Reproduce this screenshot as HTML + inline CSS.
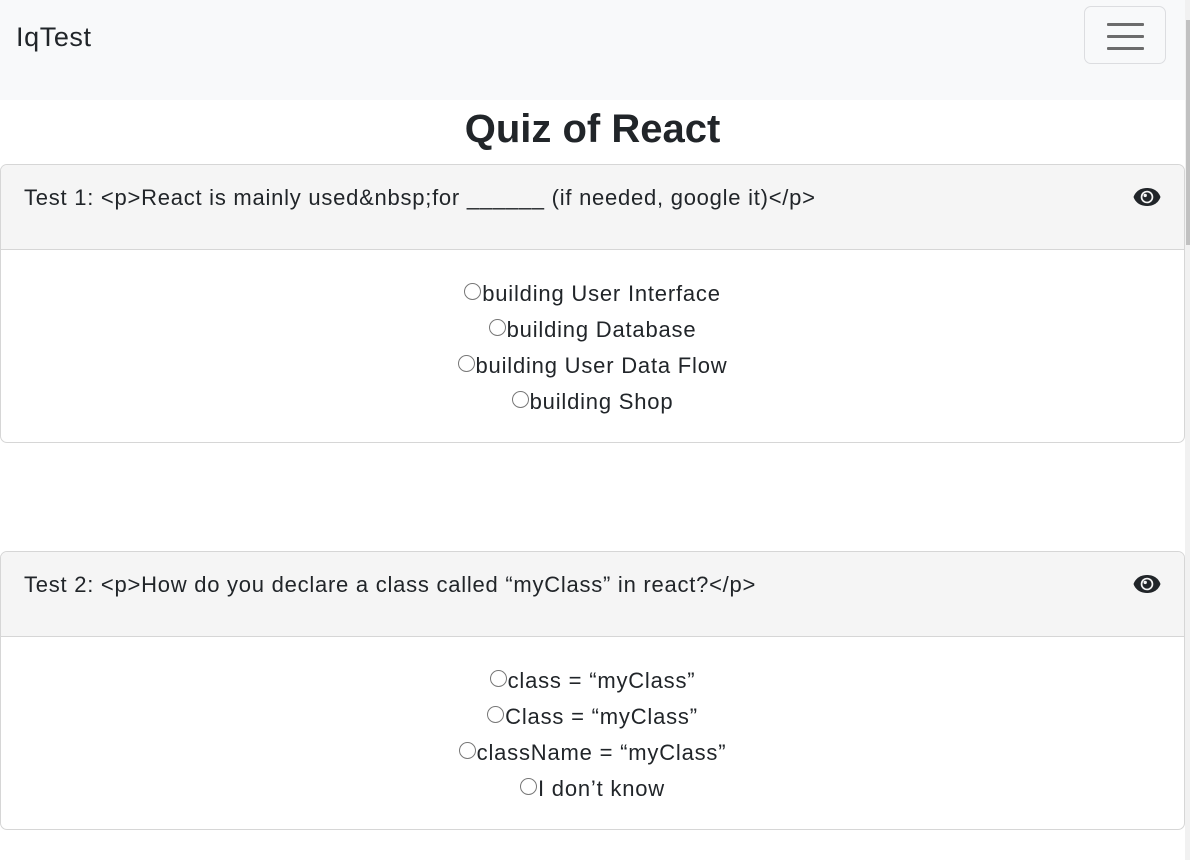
<!DOCTYPE html>
<html><head><meta charset="utf-8"><style>
body{margin:0;width:1190px;height:860px;overflow:hidden;font-family:"Liberation Sans",sans-serif;color:#212529;background:#fff;position:relative}
.nav{position:absolute;left:0;top:0;width:1185px;height:100px;background:#f8f9fa}
.brand{position:absolute;left:16px;top:20px;font-size:27px;line-height:34px;letter-spacing:0.6px}
.tog{position:absolute;left:1084px;top:6px;width:82px;height:58px;border:1px solid #dcdde0;border-radius:7px;box-sizing:border-box}
.tog i{position:absolute;left:22px;width:37px;height:3px;background:#6c6c6c;border-radius:1px}
.sb{position:absolute;left:1185px;top:0;width:5px;height:860px;background:#f1f1f1}
.sb i{position:absolute;left:1px;top:20px;width:4px;height:225px;background:#c1c1c1}
h1{position:absolute;left:0;width:1185px;top:104px;margin:0;text-align:center;font-size:40px;line-height:50px;font-weight:bold}
.card{position:absolute;left:0;width:1185px;height:279px;border:1px solid #d6d6d6;border-radius:7px;box-sizing:border-box;overflow:hidden}
.hd{height:85px;background:#f5f5f5;border-bottom:1px solid #d6d6d6;box-sizing:border-box;position:relative}
.hd span{position:absolute;left:23px;top:19px;font-size:22px;line-height:28px;letter-spacing:0.75px;white-space:nowrap}
.hd svg{position:absolute;left:1132px;top:20px}
.bd{padding-top:26px;text-align:center;font-size:22px;line-height:36px;letter-spacing:0.8px}
.r{display:inline-block;width:17px;height:17px;border:1.3px solid #777;border-radius:50%;box-sizing:border-box;vertical-align:1px;margin-right:1px}
</style></head><body>
<div class="nav"><div class="brand">IqTest</div><div class="tog"><i style="top:16px"></i><i style="top:28px"></i><i style="top:40px"></i></div></div>
<div class="sb"><i></i></div>
<h1>Quiz of React</h1>
<div class="card" style="top:164px"><div class="hd"><span>Test 1: &lt;p&gt;React is mainly used&amp;nbsp;for ______ (if needed, google it)&lt;/p&gt;</span>
<svg width="28" height="24" viewBox="0 0 28 24"><path d="M0.5 12C3 5 9 3 14 3C19 3 25 5 27.5 12C25 19 19 21 14 21C9 21 3 19 0.5 12Z" fill="#212529"/><circle cx="14" cy="12" r="6.3" fill="#f5f5f5"/><circle cx="14" cy="12" r="4.6" fill="#212529"/><circle cx="12.2" cy="10.4" r="1.7" fill="#f5f5f5"/></svg></div>
<div class="bd"><div><span class="r"></span>building User Interface</div><div><span class="r"></span>building Database</div><div><span class="r"></span>building User Data Flow</div><div><span class="r"></span>building Shop</div></div></div>
<div class="card" style="top:551px"><div class="hd"><span>Test 2: &lt;p&gt;How do you declare a class called “myClass” in react?&lt;/p&gt;</span>
<svg width="28" height="24" viewBox="0 0 28 24"><path d="M0.5 12C3 5 9 3 14 3C19 3 25 5 27.5 12C25 19 19 21 14 21C9 21 3 19 0.5 12Z" fill="#212529"/><circle cx="14" cy="12" r="6.3" fill="#f5f5f5"/><circle cx="14" cy="12" r="4.6" fill="#212529"/><circle cx="12.2" cy="10.4" r="1.7" fill="#f5f5f5"/></svg></div>
<div class="bd"><div><span class="r"></span>class = “myClass”</div><div><span class="r"></span>Class = “myClass”</div><div><span class="r"></span>className = “myClass”</div><div><span class="r"></span>I don’t know</div></div></div>
</body></html>
